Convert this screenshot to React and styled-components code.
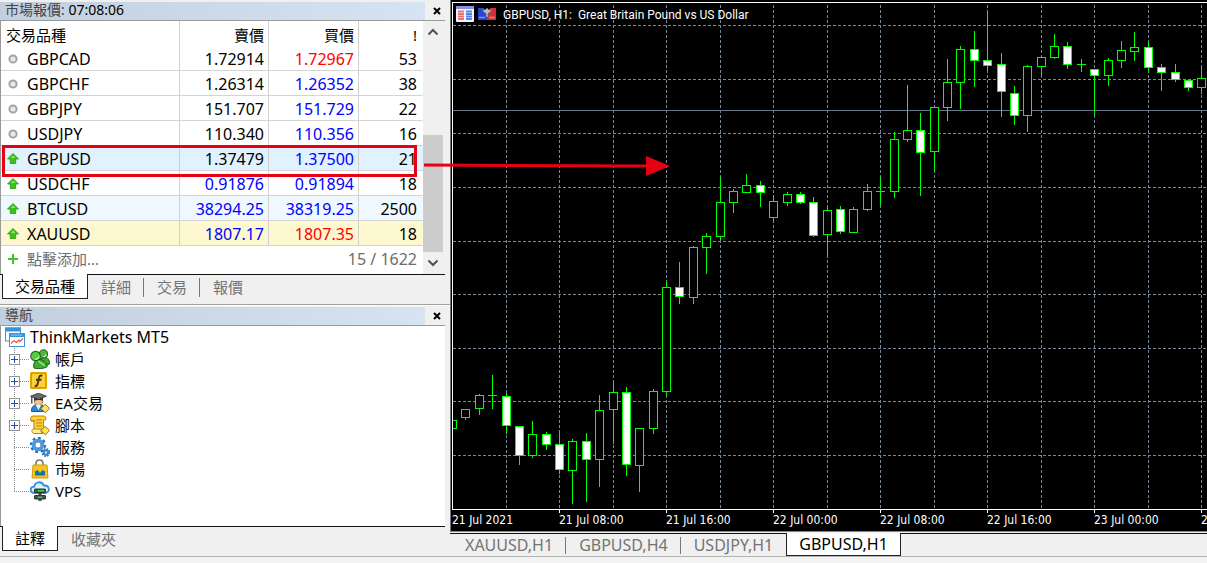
import React, { useState } from "react";
import styled, { createGlobalStyle } from "styled-components";

const quotes = [
  { symbol: "GBPCAD", bid: "1.72914", ask: "1.72967", spread: "53", bidColor: "black", askColor: "red" },
  { symbol: "GBPCHF", bid: "1.26314", ask: "1.26352", spread: "38", bidColor: "black", askColor: "blue" },
  { symbol: "GBPJPY", bid: "151.707", ask: "151.729", spread: "22", bidColor: "black", askColor: "blue" },
  { symbol: "USDJPY", bid: "110.340", ask: "110.356", spread: "16", bidColor: "black", askColor: "blue" },
  { symbol: "GBPUSD", bid: "1.37479", ask: "1.37500", spread: "21", bidColor: "black", askColor: "blue", up: true, bg: "#e0f1ff" },
  { symbol: "USDCHF", bid: "0.91876", ask: "0.91894", spread: "18", bidColor: "blue", askColor: "blue", up: true },
  { symbol: "BTCUSD", bid: "38294.25", ask: "38319.25", spread: "2500", bidColor: "blue", askColor: "blue", up: true, bg: "#eff8ff" },
  { symbol: "XAUUSD", bid: "1807.17", ask: "1807.35", spread: "18", bidColor: "blue", askColor: "red", up: true, bg: "#fdf8cf" },
];

// high, body top, body bottom, low, filled
const candles = [
  [420, 420, 428, 428, 0], [409, 409, 417, 419, 0], [394, 395, 408, 414, 0],
  [375, 395, 395, 408, 0], [393, 396, 425, 433, 1], [426, 426, 455, 464, 1],
  [421, 434, 455, 457, 0], [432, 434, 444, 449, 1], [433, 444, 469, 473, 1],
  [439, 441, 470, 503, 0], [433, 441, 459, 501, 1], [395, 410, 459, 486, 0],
  [383, 392, 409, 443, 0], [387, 392, 464, 475, 1], [428, 428, 465, 491, 0],
  [389, 391, 428, 433, 0], [282, 287, 391, 394, 0], [262, 287, 296, 303, 1],
  [246, 247, 297, 303, 0], [233, 236, 247, 273, 0], [177, 202, 236, 239, 0],
  [189, 191, 202, 212, 0], [174, 185, 192, 192, 0], [181, 185, 192, 206, 1],
  [195, 201, 217, 221, 0], [192, 194, 202, 205, 0], [192, 194, 202, 203, 1],
  [197, 202, 235, 236, 1], [207, 210, 234, 255, 0], [206, 209, 231, 233, 1],
  [207, 209, 232, 232, 0], [184, 191, 209, 210, 0], [177, 191, 191, 204, 0],
  [132, 139, 191, 197, 0], [85, 130, 139, 141, 0], [113, 130, 152, 195, 1],
  [107, 107, 151, 170, 0], [59, 82, 107, 120, 0], [46, 49, 82, 108, 0],
  [31, 49, 60, 86, 1], [12, 60, 65, 70, 1], [53, 64, 91, 116, 1],
  [86, 93, 115, 124, 1], [65, 66, 115, 131, 0], [56, 57, 66, 75, 0],
  [34, 46, 57, 58, 0], [42, 46, 64, 68, 1], [59, 64, 64, 71, 0],
  [69, 69, 75, 114, 1], [58, 60, 75, 85, 0], [41, 50, 60, 67, 0],
  [32, 47, 51, 60, 0], [42, 47, 67, 70, 1], [64, 67, 72, 90, 1],
  [64, 72, 79, 81, 1], [79, 80, 87, 90, 1], [66, 78, 87, 93, 0],
];

const STEP = 13.38;
const TOP = 2;
const AXIS = 509 - TOP;
const gridRows = [25, 79, 133, 187, 241, 294, 348, 401, 455];
const times = [
  "21 Jul 2021",
  "21 Jul 08:00",
  "21 Jul 16:00",
  "22 Jul 00:00",
  "22 Jul 08:00",
  "22 Jul 16:00",
  "23 Jul 00:00",
  "23 Jul 08:00",
];

const colX = (i) => Math.round(i * STEP) + 0.5;
const rowY = (y) => y - TOP + 0.5;

function Candle({ index, data }) {
  const [high, top, bottom, low, filled] = data;
  const x = colX(index);
  return (
    <g stroke="#00ff00" fill={filled ? "#fff" : "#000"}>
      <line x1={x} x2={x} y1={rowY(high) - 0.5} y2={rowY(low) + 0.5} />
      {top === bottom ? (
        <line x1={x - 4.5} x2={x + 4.5} y1={rowY(top)} y2={rowY(top)} />
      ) : (
        <rect x={x - 4} y={rowY(top)} width="8" height={bottom - top} />
      )}
    </g>
  );
}

function Plot() {
  const gridCols = [];
  for (let i = 4; i <= 56; i += 4) gridCols.push(i);
  return (
    <PlotSvg aria-label="GBPUSD H1">
      <g stroke="#778899" strokeDasharray="3 2">
        {gridCols.map((i) => (
          <line key={i} x1={colX(i)} x2={colX(i)} y1="3" y2={AXIS} />
        ))}
        {gridRows.map((y) => (
          <line key={y} x1="1" x2="100%" y1={rowY(y)} y2={rowY(y)} />
        ))}
      </g>
      <line x1="1" x2="100%" y1={rowY(110)} y2={rowY(110)} stroke="#6b7889" />
      {candles.map((c, i) => (
        <Candle key={i} index={i} data={c} />
      ))}
      <g stroke="#fff">
        <line x1="0" x2="100%" y1="0.5" y2="0.5" />
        <line x1="0.5" x2="0.5" y1="0" y2={AXIS} />
        <line x1="0" x2="100%" y1={AXIS + 0.5} y2={AXIS + 0.5} />
        {gridCols
          .filter((i) => i % 8 === 0)
          .map((i) => (
            <line key={i} x1={colX(i)} x2={colX(i)} y1={AXIS} y2={AXIS + 4} />
          ))}
      </g>
    </PlotSvg>
  );
}

const DotIcon = () => (
  <svg width="12" height="12" viewBox="0 0 12 12">
    <circle cx="6" cy="6" r="3.6" fill="#e8e8e8" stroke="#a2a2a2" strokeWidth="2" />
  </svg>
);

const UpIcon = () => (
  <svg width="12" height="12" viewBox="0 0 12 12">
    <path d="M6 0.5 L11.5 6 H8.7 V10.5 H3.3 V6 H0.5 Z" fill="#3cc21c" stroke="#249a0c" strokeWidth=".8" />
    <path d="M6 2.4 L8.4 5 H3.8 Z" fill="#8bea66" />
  </svg>
);

const PlusIcon = () => (
  <svg width="12" height="12" viewBox="0 0 12 12">
    <path d="M6 1V11M1 6H11" stroke="#3cc928" strokeWidth="2" />
  </svg>
);

const CloseIcon = () => (
  <svg width="8" height="8" viewBox="0 0 8 8">
    <path d="M1 1L7 7M7 1L1 7" stroke="#000" strokeWidth="2" />
  </svg>
);

const Chevron = ({ down }) => (
  <svg width="12" height="8" viewBox="0 0 12 8">
    <path d={down ? "M1.5 1.5L6 6L10.5 1.5" : "M1.5 6.5L6 2L10.5 6.5"} fill="none" stroke="#505050" strokeWidth="2" />
  </svg>
);

const icons = {
  terminal: (
    <>
      <rect x=".5" y="1" width="15" height="13" fill="#fff" stroke="#3d93d6" />
      <rect x="0" y=".5" width="16" height="4" fill="#3494dc" />
      <rect x="4.5" y="6.5" width="15" height="13" fill="#fff" stroke="#3d93d6" />
      <rect x="4" y="6" width="16" height="4" fill="#3494dc" />
      <path d="M6 8H17" stroke="#8bcaf5" />
      <path d="M6 16.5L9 13.5L11.5 15.5L14 13L15 14.5L18 11.5" fill="none" stroke="#ee5a36" strokeWidth="1.3" />
    </>
  ),
  accounts: (
    <>
      <path d="M10 13C9.5 9.5 11 8 14 8C17.5 8 19.5 10.5 19.5 15L15 16.5Z" fill="#3fae30" stroke="#175c12" />
      <ellipse cx="13.5" cy="5" rx="4" ry="4.2" fill="#4fbb3c" stroke="#175c12" />
      <path d="M12.5 7.6C14 7.4 15.6 6.4 16.6 4.8C16.6 7 15 8.8 12.5 7.6Z" fill="#f0f8dc" />
      <path d="M4 19C3 14.5 4.5 11 8.5 10.5C13 10.2 16.5 13 17.3 17.5C14 20 7 20 4 19Z" fill="#3fae30" stroke="#175c12" />
      <ellipse cx="5.5" cy="7" rx="4.8" ry="4.6" fill="#5cc647" stroke="#175c12" transform="rotate(-30 5.5 7)" />
      <path d="M4.6 10.2C6.6 10 8.7 8.5 9.5 6.6C10 9.4 7.4 12 4.6 10.2Z" fill="#f0f8dc" />
      <path d="M8.5 12.3L14.5 16.6" stroke="#a5e38e" strokeWidth="1.4" />
    </>
  ),
  indicators: (
    <>
      <rect x="0" y="1" width="17" height="17" rx="1.5" fill="#e2a800" />
      <rect x="1.5" y="2.5" width="14" height="14" fill="#fbd137" stroke="#c18a00" strokeWidth=".6" />
      <path d="M12.3 4.8C10.2 3.8 9.4 5 9 7L7.6 13C7.2 15 6.2 15.4 4.7 14.7M6 8.8H11.5" fill="none" stroke="#4a3510" strokeWidth="1.9" />
    </>
  ),
  experts: (
    <>
      <path d="M1.5 18.5C1 14 4 11.5 8.5 11.5C13 11.5 16 14 15.5 18.5Z" fill="#2d83cc" stroke="#14599a" />
      <circle cx="8.5" cy="8.6" r="4.2" fill="#eec08a" stroke="#84603a" strokeWidth=".7" />
      <path d="M5.8 12L8.5 17L11 12" fill="#e9f5ff" />
      <path d="M4 3.8V8C6.5 6.8 11 6.8 13 8V3.8Z" fill="#333" />
      <path d="M0.5 3.2L8.5 0L16.5 3.2L8.5 6.5Z" fill="#6b6b6b" stroke="#303030" strokeWidth=".8" />
      <path d="M1.8 4V10.5" stroke="#303030" strokeWidth="1.2" />
      <path d="M15.3 11.2L19.6 15.5L15.3 19.8L11 15.5Z" fill="#ffe45a" stroke="#94750c" />
    </>
  ),
  scripts: (
    <>
      <path d="M3 1H13.5C15.5 1 16 2.5 15.5 5H13.5V17.5H4V6H1C0 3 1 1 3 1Z" fill="#ffd338" stroke="#ba8400" />
      <path d="M1 5.7H5M2.5 17.5C1 15.5 2.5 14 4 14H11.5C10.8 16 11 17 12.5 18.5H4Z" fill="#fff09b" stroke="#ba8400" />
      <path d="M6.2 4.8H12M6.2 7.8H12M6.2 10.8H12" stroke="#bb9027" strokeWidth="1.2" />
      <path d="M15.3 11.2L19.6 15.5L15.3 19.8L11 15.5Z" fill="#ffe45a" stroke="#94750c" />
    </>
  ),
  services: (
    <>
      <circle cx="8" cy="8" r="6.8" fill="none" stroke="#246fb5" strokeWidth="2.6" strokeDasharray="2.7 2.6" />
      <circle cx="8" cy="8" r="4.7" fill="#fff" stroke="#4d9bde" strokeWidth="3.2" />
      <circle cx="8" cy="8" r="3" fill="#fff" stroke="#2567a7" strokeWidth=".7" />
      <circle cx="16" cy="15.5" r="3.5" fill="none" stroke="#1c5da1" strokeWidth="1.8" strokeDasharray="1.5 1.25" />
      <circle cx="16" cy="15.5" r="2.1" fill="#fff" stroke="#3c86cc" strokeWidth="2.1" />
    </>
  ),
  market: (
    <>
      <path d="M6 8V4.5C6 -0.2 13 -0.2 13 4.5V8" fill="none" stroke="#777" strokeWidth="1.6" />
      <path d="M3 6H17L18 19H2Z" fill="#f6c51c" stroke="#d19b00" />
      <path d="M5 16.5V12.5L7.5 11L10 14L12.5 11L15 12.5V16.5Z" fill="#176fae" />
    </>
  ),
  vps: (
    <>
      <path d="M4.5 12C-0.8 11.5 0 5.5 4.2 5.6C5 0.4 12 -0.4 13.8 4.6C19.4 3.8 21 11 15.5 12Z" fill="#d9f0ff" stroke="#3192d2" strokeWidth="1.8" />
      <path d="M10 10V20" stroke="#3b4845" strokeWidth="3" />
      <rect x="4.5" y="8" width="11" height="3.5" rx=".5" fill="#485450" stroke="#2d3733" />
      <rect x="4.5" y="14.5" width="11" height="3.5" rx=".5" fill="#485450" stroke="#2d3733" />
      <path d="M8 9.8H14M8 16.2H12" stroke="#35db43" strokeWidth="1.6" />
    </>
  ),
};

const TreeIcon = ({ name }) => (
  <svg width="20" height="20" viewBox="0 0 20 20">
    {icons[name]}
  </svg>
);

const tree = [
  { icon: "accounts", label: "帳戶", open: true },
  { icon: "indicators", label: "指標", open: true },
  { icon: "experts", label: "EA交易", open: true },
  { icon: "scripts", label: "腳本", open: true },
  { icon: "services", label: "服務" },
  { icon: "market", label: "市場" },
  { icon: "vps", label: "VPS" },
];

function TabStrip({ items, initial, chart }) {
  const [current, setCurrent] = useState(initial);
  return (
    <Tabs $chart={chart}>
      {items.map((item, index) => (
        <Tab
          key={item}
          type="button"
          $active={index === current}
          $line={index !== current && index + 1 !== current && index < items.length - 1}
          onClick={() => setCurrent(index)}
        >
          {item}
        </Tab>
      ))}
    </Tabs>
  );
}

function PanelTitle({ children }) {
  return (
    <TitleRow>
      <Title>{children}</Title>
      <CloseButton type="button" aria-label="close">
        <CloseIcon />
      </CloseButton>
    </TitleRow>
  );
}

export default function App() {
  return (
    <>
      <GlobalStyle />
      <Window>
        <Workspace>
          <Sidebar>
            <PanelTitle>
              市場報價: <b>07:08:06</b>
            </PanelTitle>
            <Market>
              <MarketList>
                <Quotes>
                  <colgroup>
                    <col width="179" />
                    <col width="89" />
                    <col width="90" />
                    <col />
                  </colgroup>
                  <thead>
                    <tr>
                      <th>交易品種</th>
                      <th>賣價</th>
                      <th>買價</th>
                      <th>!</th>
                    </tr>
                  </thead>
                  <tbody>
                    {quotes.map((q) => (
                      <QuoteRow key={q.symbol} $bg={q.bg}>
                        <td>
                          <SymbolCell>
                            {q.up ? <UpIcon /> : <DotIcon />}
                            {q.symbol}
                          </SymbolCell>
                        </td>
                        <Price $color={q.bidColor}>{q.bid}</Price>
                        <Price $color={q.askColor}>{q.ask}</Price>
                        <Price $color="black">{q.spread}</Price>
                      </QuoteRow>
                    ))}
                  </tbody>
                </Quotes>
                <AddRow>
                  <SymbolCell>
                    <PlusIcon />
                    <small>點擊添加...</small>
                  </SymbolCell>
                  <span>15 / 1622</span>
                </AddRow>
                <Highlight />
              </MarketList>
              <ScrollBar>
                <ScrollButton type="button" aria-label="up">
                  <Chevron />
                </ScrollButton>
                <Thumb />
                <ScrollButton type="button" aria-label="down">
                  <Chevron down />
                </ScrollButton>
              </ScrollBar>
            </Market>
            <TabStrip items={["交易品種", "詳細", "交易", "報價"]} initial={0} />
            <Splitter />
            <PanelTitle>導航</PanelTitle>
            <Navigator>
              <Tree>
                <RootItem>
                  <TreeIcon name="terminal" />
                  ThinkMarkets MT5
                </RootItem>
                {tree.map((node) => (
                  <TreeItem key={node.icon}>
                    {node.open ? (
                      <Expander type="button" aria-label={node.label}>
                        <svg width="11" height="11" viewBox="0 0 11 11">
                          <rect x=".5" y=".5" width="10" height="10" fill="#fff" stroke="#949494" />
                          <path d="M2 5.5H9M5.5 2V9" stroke="#2f4b9c" />
                        </svg>
                      </Expander>
                    ) : (
                      <Spacer />
                    )}
                    <Branch $long={!node.open} />
                    <TreeIcon name={node.icon} />
                    <TreeLabel>{node.label}</TreeLabel>
                  </TreeItem>
                ))}
              </Tree>
            </Navigator>
            <TabStrip items={["註釋", "收藏夾"]} initial={0} />
          </Sidebar>
          <ChartArea>
            <ChartBox>
              <Plot />
              <ChartTitle>
                <svg width="18" height="16" viewBox="0 0 18 16">
                  <rect width="18" height="16" rx="1" fill="#f1f3ff" />
                  <rect width="18" height="3" fill="#8792dc" />
                  <path d="M2 5.5H8M2 8H8M2 10.5H8M2 13H8" stroke="#ef7168" strokeWidth="1.8" />
                  <path d="M10 5.5H16M10 8H16M10 10.5H16M10 13H16" stroke="#5d82e6" strokeWidth="1.8" />
                </svg>
                <svg width="18" height="16" viewBox="0 0 18 16">
                  <path d="M0 2H6V6L9 9V14H0Z" fill="#2943d3" />
                  <path d="M18 2H12V6L9 9V14H18Z" fill="#cf3038" />
                  <path d="M4.5 3.5L7 4L9 2L11 4L13.5 3.5L12.5 6L10 7.5V11H8V7.5L5.5 6Z" fill="#b9bdc6" stroke="#676c76" strokeWidth=".7" />
                  <path d="M1 11.5H7" stroke="#7891ff" strokeWidth="1.5" />
                  <path d="M11 11.5H17" stroke="#f07878" strokeWidth="1.5" />
                </svg>
                <span>GBPUSD, H1:&nbsp; Great Britain Pound vs US Dollar</span>
              </ChartTitle>
              <TimeAxis>
                {times.map((t) => (
                  <span key={t}>{t}</span>
                ))}
              </TimeAxis>
            </ChartBox>
            <TabStrip chart items={["XAUUSD,H1", "GBPUSD,H4", "USDJPY,H1", "GBPUSD,H1"]} initial={3} />
          </ChartArea>
        </Workspace>
        <StatusBar />
        <Pointer width="246" height="22" viewBox="0 0 246 22">
          <path d="M0 10L222 11" stroke="#e60012" strokeWidth="3" />
          <path d="M222 1L246 11L222 21Z" fill="#e60012" />
        </Pointer>
      </Window>
    </>
  );
}

const GlobalStyle = createGlobalStyle`
  * {
    box-sizing: border-box;
  }
  body {
    margin: 0;
    background: #f0f0f0;
    color: #000;
    font: 16px/20px "Noto Sans", "Noto Sans CJK TC", sans-serif;
  }
  button {
    font: inherit;
    color: inherit;
    border: 0;
    padding: 0;
    background: none;
  }
  svg {
    flex: none;
    display: block;
  }
`;

const Window = styled.div`
  position: relative;
  display: flex;
  flex-direction: column;
  min-height: 100vh;
  overflow: hidden;
`;

const Workspace = styled.main`
  flex: 1;
  display: flex;
`;

const Sidebar = styled.aside`
  flex: none;
  width: 450px;
  display: flex;
  flex-direction: column;
  padding: 2px 5px 5px 0;
`;

const TitleRow = styled.header`
  display: flex;
  height: 19px;
  border-bottom: 1px solid #9a9a9a;
`;

const Title = styled.h2`
  flex: 1;
  margin: 0;
  padding-left: 5px;
  background: linear-gradient(90deg, #c1cfde, #d6e4f2);
  color: #444;
  font-size: 14px;
  font-weight: 400;
  line-height: 16px;
  b {
    color: #000;
    font-weight: 400;
  }
`;

const CloseButton = styled.button`
  width: 20px;
  display: flex;
  align-items: center;
  justify-content: flex-end;
  padding-right: 4px;
`;

const Market = styled.section`
  display: flex;
  height: 253px;
  background: #fff;
  border-left: 1px solid #9a9a9a;
`;

const MarketList = styled.div`
  position: relative;
  flex: 1;
`;

const Quotes = styled.table`
  width: 100%;
  table-layout: fixed;
  border-collapse: separate;
  border-spacing: 0;
  th,
  td {
    height: 25px;
    padding: 2px 4px 0 0;
    border-right: 1px solid #d0d0d0;
    line-height: 20px;
    text-align: right;
  }
  th {
    font-size: 15px;
    font-weight: 400;
  }
  th:first-child {
    padding-left: 5px;
    text-align: left;
  }
  th:last-child,
  td:last-child {
    padding-right: 5px;
    border-right-color: transparent;
  }
`;

const QuoteRow = styled.tr`
  background: ${(props) => props.$bg || "#fff"};
  td {
    border-bottom: 1px solid #d4d4d4;
  }
`;

const Price = styled.td`
  color: ${(props) => ({ red: "#ff0000", blue: "#0000ff", black: "#000" })[props.$color]};
`;

const SymbolCell = styled.div`
  display: flex;
  align-items: center;
  gap: 8px;
  padding-left: 6px;
`;

const AddRow = styled.div`
  display: flex;
  align-items: center;
  justify-content: space-between;
  height: 26px;
  padding-right: 6px;
  color: #6d6d6d;
  small {
    font-size: 15px;
  }
`;

const Highlight = styled.div`
  position: absolute;
  top: 124px;
  left: 1px;
  right: 6px;
  height: 32px;
  border: 3px solid #e60012;
  pointer-events: none;
`;

const ScrollBar = styled.div`
  width: 22px;
  display: flex;
  flex-direction: column;
  justify-content: space-between;
  padding-right: 2px;
  background: #f0f0f0;
`;

const ScrollButton = styled.button`
  height: 22px;
  display: flex;
  align-items: center;
  justify-content: center;
`;

const Thumb = styled.div`
  height: 117px;
  margin-top: auto;
  background: #cdcdcd;
`;

const Tabs = styled.nav`
  display: flex;
  height: ${(props) => (props.$chart ? "23px" : "25px")};
  padding-left: 2px;
  border-top: 1px solid #111;
  font-size: ${(props) => (props.$chart ? "16px" : "15px")};
`;

const Tab = styled.button`
  position: relative;
  margin-top: ${(props) => (props.$active ? "-1px" : "0")};
  padding: 0 12px;
  border: 1px solid transparent;
  border-width: 0 1px 1px;
  color: ${(props) => (props.$active ? "#000" : "#747474")};
  background: ${(props) => (props.$active ? "#fff" : "transparent")};
  border-color: ${(props) => (props.$active ? "#222" : "transparent")};
  &::after {
    content: "";
    display: ${(props) => (props.$line ? "block" : "none")};
    position: absolute;
    top: 3px;
    bottom: 1px;
    right: -1px;
    width: 1px;
    background: #777;
  }
`;

const Splitter = styled.div`
  height: 8px;
  margin-right: -5px;
  background: linear-gradient(#f0f0f0 5px, #a0a0a0 5px, #a0a0a0 6px, #fff 6px, #fff 7px, #f0f0f0 7px);
`;

const Navigator = styled.section`
  flex: 1;
  background: #fff;
  border-left: 1px solid #9a9a9a;
`;

const Tree = styled.ul`
  position: relative;
  display: grid;
  grid-template-rows: repeat(8, 1fr);
  height: 176px;
  margin: 0;
  padding: 0;
  list-style: none;
  &::before {
    content: "";
    position: absolute;
    top: 22px;
    bottom: 11px;
    left: 13px;
    border-left: 1px dotted #8a8a8a;
  }
`;

const RootItem = styled.li`
  display: flex;
  align-items: center;
  gap: 5px;
  padding-left: 4px;
`;

const TreeItem = styled.li`
  position: relative;
  display: flex;
  align-items: center;
  padding-left: 8px;
`;

const Expander = styled.button`
  width: 11px;
  height: 11px;
`;

const Spacer = styled.span`
  width: 5px;
`;

const Branch = styled.span`
  width: ${(props) => (props.$long ? "15px" : "9px")};
  margin-right: 1px;
  border-top: 1px dotted #8a8a8a;
`;

const TreeLabel = styled.span`
  margin-left: 5px;
  font-size: 15px;
`;

const ChartArea = styled.section`
  flex: 1;
  min-width: 0;
  display: flex;
  flex-direction: column;
`;

const ChartBox = styled.div`
  position: relative;
  flex: 1;
  display: flex;
  flex-direction: column;
  padding: 2px 0 0 1px;
  border-left: 1px solid #777;
  border-bottom: 1px solid #888;
  margin-bottom: 1px;
  background: #000;
  color: #fff;
  font: 12px/14px "DejaVu Sans Condensed", "DejaVu Sans", sans-serif;
`;

const PlotSvg = styled.svg`
  flex: 1;
  width: 100%;
  min-height: 511px;
`;

const ChartTitle = styled.div`
  position: absolute;
  top: 6px;
  left: 5px;
  display: flex;
  align-items: center;
  gap: 4px;
  font-family: Roboto, sans-serif;
  white-space: nowrap;
  span {
    margin-left: 3px;
    padding-top: 2px;
  }
`;

const TimeAxis = styled.div`
  display: grid;
  grid-auto-flow: column;
  grid-auto-columns: 107px;
  height: 18px;
  overflow: hidden;
  white-space: nowrap;
`;

const StatusBar = styled.footer`
  height: 7px;
  border-top: 1px solid #b4b4b4;
  background: #f3f3f3;
`;

const Pointer = styled.svg`
  position: absolute;
  top: 155px;
  left: 424px;
  pointer-events: none;
`;
